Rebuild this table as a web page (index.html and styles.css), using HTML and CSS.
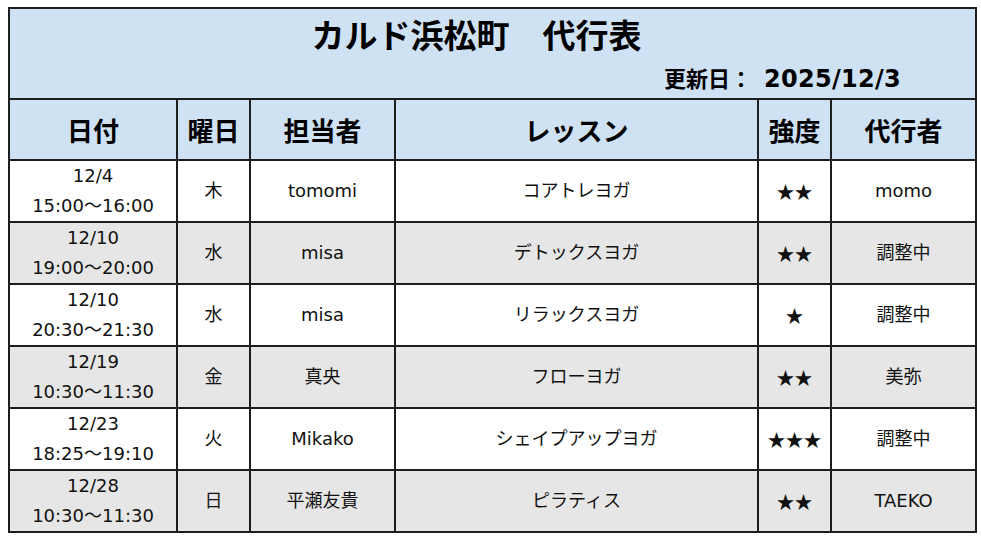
FILE: index.html
```html
<!DOCTYPE html>
<html lang="ja">
<head>
<meta charset="utf-8">
<link rel="stylesheet" href="styles.css">
</head>
<body>
<div class="wrap">
<table class="sheet">
  <colgroup>
    <col class="c-date"><col class="c-dow"><col class="c-staff"><col class="c-lesson"><col class="c-level"><col class="c-sub">
  </colgroup>
  <tr class="title-row">
    <td colspan="6" class="title-cell">
      <div class="title">カルド浜松町　代行表</div>
      <div class="updated"><span class="upd-label">更新日：</span><span class="upd-date">2025/12/3</span></div>
    </td>
  </tr>
  <tr class="head-row">
    <th>日付</th><th>曜日</th><th>担当者</th><th>レッスン</th><th>強度</th><th>代行者</th>
  </tr>
  <tr class="row">
    <td class="date">12/4<br>15:00〜16:00</td><td>木</td><td>tomomi</td><td>コアトレヨガ</td><td class="stars">★★</td><td>momo</td>
  </tr>
  <tr class="row alt">
    <td class="date">12/10<br>19:00〜20:00</td><td>水</td><td>misa</td><td>デトックスヨガ</td><td class="stars">★★</td><td>調整中</td>
  </tr>
  <tr class="row">
    <td class="date">12/10<br>20:30〜21:30</td><td>水</td><td>misa</td><td>リラックスヨガ</td><td class="stars">★</td><td>調整中</td>
  </tr>
  <tr class="row alt">
    <td class="date">12/19<br>10:30〜11:30</td><td>金</td><td>真央</td><td>フローヨガ</td><td class="stars">★★</td><td>美弥</td>
  </tr>
  <tr class="row">
    <td class="date">12/23<br>18:25〜19:10</td><td>火</td><td>Mikako</td><td>シェイプアップヨガ</td><td class="stars">★★★</td><td>調整中</td>
  </tr>
  <tr class="row alt">
    <td class="date">12/28<br>10:30〜11:30</td><td>日</td><td>平瀬友貴</td><td>ピラティス</td><td class="stars">★★</td><td>TAEKO</td>
  </tr>
</table>
</div>
</body>
</html>
```
FILE: styles.css
```css
html, body {
  margin: 0;
  padding: 0;
  background: #ffffff;
}
.wrap {
  padding: 7px 0 0 8px;
}
.sheet {
  border-collapse: collapse;
  table-layout: fixed;
  width: 967px;
  font-family: "DejaVu Sans", "Noto Sans CJK JP", sans-serif;
  color: #111;
}
.c-date { width: 168px; }
.c-dow { width: 73px; }
.c-staff { width: 145px; }
.c-lesson { width: 363px; }
.c-level { width: 73px; }
.c-sub { width: 145px; }
.sheet td, .sheet th {
  border: 2px solid #1e1e1e;
  padding: 0;
  text-align: center;
  vertical-align: middle;
}
.title-row td {
  height: 89px;
  background: #cfe2f3;
}
.title {
  font-family: "Noto Sans CJK JP", sans-serif;
  font-weight: 700;
  font-size: 33px;
  line-height: 40px;
  margin-top: -3px;
  padding-right: 32px;
  color: #000;
}
.updated {
  font-family: "Noto Sans CJK JP", sans-serif;
  font-weight: 700;
  font-size: 22px;
  line-height: 28px;
  text-align: right;
  padding-right: 74px;
  margin-top: 9px;
  margin-bottom: -3px;
  color: #000;
}
.upd-label {
  margin-right: 12px;
}
.upd-date {
  font-family: "DejaVu Sans", sans-serif;
  font-weight: 700;
  font-size: 24px;
  letter-spacing: 0.3px;
}
.head-row th {
  height: 59px;
  background: #cfe2f3;
  font-family: "Noto Sans CJK JP", sans-serif;
  font-weight: 700;
  font-size: 26px;
  color: #000;
}
.row td {
  height: 59.7px;
  background: #ffffff;
  font-size: 18px;
  line-height: 30px;
  font-family: "DejaVu Sans", "Noto Sans CJK JP", sans-serif;
}
.row.alt td {
  background: #e6e6e6;
}
.row td.stars {
  font-family: "Noto Sans CJK JP", sans-serif;
  line-height: 26px;
}
```
